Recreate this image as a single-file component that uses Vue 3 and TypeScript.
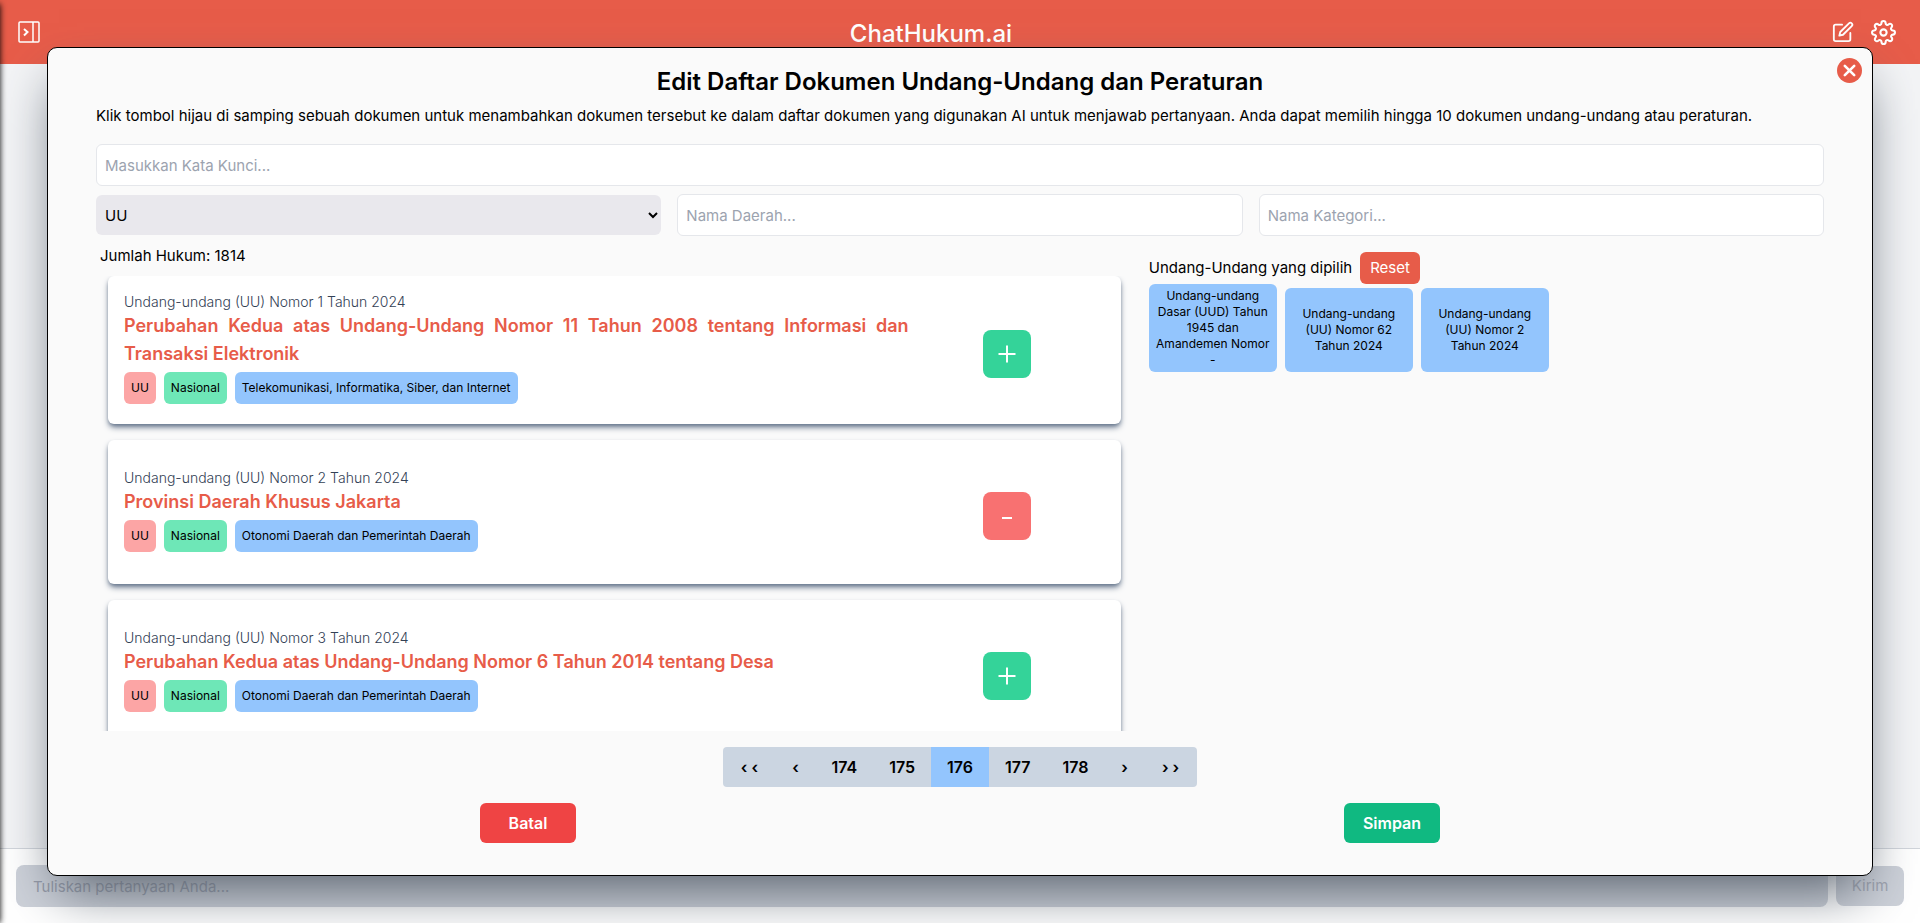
<script setup lang="ts">
import { ref } from 'vue'

interface Law {
  number: string
  title: string
  kind: string
  region: string
  category: string
  selected: boolean
}

const keyword = ref('')
const kind = ref('UU')
const region = ref('')
const category = ref('')
const question = ref('')
const total = 1814

const laws = ref<Law[]>([
  {
    number: 'Undang-undang (UU) Nomor 1 Tahun 2024',
    title: 'Perubahan Kedua atas Undang-Undang Nomor 11 Tahun 2008 tentang Informasi dan Transaksi Elektronik',
    kind: 'UU',
    region: 'Nasional',
    category: 'Telekomunikasi, Informatika, Siber, dan Internet',
    selected: false,
  },
  {
    number: 'Undang-undang (UU) Nomor 2 Tahun 2024',
    title: 'Provinsi Daerah Khusus Jakarta',
    kind: 'UU',
    region: 'Nasional',
    category: 'Otonomi Daerah dan Pemerintah Daerah',
    selected: true,
  },
  {
    number: 'Undang-undang (UU) Nomor 3 Tahun 2024',
    title: 'Perubahan Kedua atas Undang-Undang Nomor 6 Tahun 2014 tentang Desa',
    kind: 'UU',
    region: 'Nasional',
    category: 'Otonomi Daerah dan Pemerintah Daerah',
    selected: false,
  },
])

const chosen = ref<string[]>([
  'Undang-undang Dasar (UUD) Tahun 1945 dan Amandemen Nomor -',
  'Undang-undang (UU) Nomor 62 Tahun 2024',
  'Undang-undang (UU) Nomor 2 Tahun 2024',
])

const pages = [174, 175, 176, 177, 178]
const page = ref(176)
</script>

<template>
  <div class="app">
    <aside class="drawer"></aside>
    <header class="topbar">
      <button class="icon-btn" type="button" aria-label="Buka panel">
        <svg width="22" height="22" viewBox="0 0 22 22" fill="none" stroke="currentColor">
          <rect x="1" y="1" width="20" height="20" rx="1" stroke-width="1.5" />
          <path d="M15 1v20" stroke-width="1.5" />
          <path d="M6 8l3.5 3L6 14.5" stroke-width="2" />
        </svg>
      </button>
      <h1 class="brand">ChatHukum.ai</h1>
      <div class="tools">
        <button class="icon-btn" type="button" aria-label="Percakapan baru">
          <svg width="22" height="22" viewBox="0 0 24 24" fill="none" stroke="currentColor" stroke-width="2" stroke-linecap="round" stroke-linejoin="round">
            <path d="M11 4H4a2 2 0 0 0-2 2v14a2 2 0 0 0 2 2h14a2 2 0 0 0 2-2v-7" />
            <path d="M18.5 2.5a2.121 2.121 0 0 1 3 3L12 15l-4 1 1-4 9.5-9.5z" />
          </svg>
        </button>
        <button class="icon-btn" type="button" aria-label="Pengaturan">
          <svg width="25" height="25" viewBox="0 0 24 24" fill="none" stroke="currentColor" stroke-width="2" stroke-linecap="round" stroke-linejoin="round">
            <circle cx="12" cy="12" r="3" />
            <path d="M19.4 15a1.65 1.65 0 0 0 .33 1.82l.06.06a2 2 0 0 1 0 2.83 2 2 0 0 1-2.83 0l-.06-.06a1.65 1.65 0 0 0-1.82-.33 1.65 1.65 0 0 0-1 1.51V21a2 2 0 0 1-2 2 2 2 0 0 1-2-2v-.09A1.65 1.65 0 0 0 9 19.4a1.65 1.65 0 0 0-1.82.33l-.06.06a2 2 0 0 1-2.83 0 2 2 0 0 1 0-2.83l.06-.06a1.65 1.65 0 0 0 .33-1.82 1.65 1.65 0 0 0-1.51-1H3a2 2 0 0 1-2-2 2 2 0 0 1 2-2h.09A1.65 1.65 0 0 0 4.6 9a1.65 1.65 0 0 0-.33-1.82l-.06-.06a2 2 0 0 1 0-2.83 2 2 0 0 1 2.83 0l.06.06a1.65 1.65 0 0 0 1.82.33H9a1.65 1.65 0 0 0 1-1.51V3a2 2 0 0 1 2-2 2 2 0 0 1 2 2v.09a1.65 1.65 0 0 0 1 1.51 1.65 1.65 0 0 0 1.82-.33l.06-.06a2 2 0 0 1 2.83 0 2 2 0 0 1 0 2.83l-.06.06a1.65 1.65 0 0 0-.33 1.82V9a1.65 1.65 0 0 0 1.51 1H21a2 2 0 0 1 2 2 2 2 0 0 1-2 2h-.09a1.65 1.65 0 0 0-1.51 1z" />
          </svg>
        </button>
      </div>
    </header>
    <main class="chat"></main>
    <form class="composer" @submit.prevent>
      <input v-model="question" class="question" type="text" placeholder="Tuliskan pertanyaan Anda..." aria-label="Pertanyaan" disabled>
      <button class="send" type="submit" disabled>Kirim</button>
    </form>

    <div class="overlay">
      <section class="modal" role="dialog" aria-labelledby="modal-title">
        <button class="close" type="button" aria-label="Tutup">
          <svg width="25" height="25" viewBox="0 0 25 25" fill="none">
            <circle cx="12.5" cy="12.5" r="12.5" fill="#e75c49" />
            <path d="M7.8 7.8l9.4 9.4M17.2 7.8l-9.4 9.4" stroke="#fff" stroke-width="2.6" stroke-linecap="round" />
          </svg>
        </button>
        <h2 id="modal-title" class="title">Edit Daftar Dokumen Undang-Undang dan Peraturan</h2>
        <p class="intro">Klik tombol hijau di samping sebuah dokumen untuk menambahkan dokumen tersebut ke dalam daftar dokumen yang digunakan AI untuk menjawab pertanyaan. Anda dapat memilih hingga 10 dokumen undang-undang atau peraturan.</p>

        <div class="filters">
          <input v-model="keyword" class="field wide" type="text" placeholder="Masukkan Kata Kunci..." aria-label="Kata kunci">
          <select v-model="kind" class="field select" aria-label="Jenis hukum">
            <option>UU</option>
          </select>
          <input v-model="region" class="field" type="text" placeholder="Nama Daerah..." aria-label="Nama daerah">
          <input v-model="category" class="field" type="text" placeholder="Nama Kategori..." aria-label="Nama kategori">
        </div>

        <div class="columns">
          <div class="results">
            <p class="count">Jumlah Hukum: {{ total }}</p>
            <div class="list">
              <article v-for="law in laws" :key="law.number" class="card">
                <div class="info">
                  <p class="number">{{ law.number }}</p>
                  <h3 class="name">{{ law.title }}</h3>
                  <div class="tags">
                    <span class="tag red">{{ law.kind }}</span>
                    <span class="tag green">{{ law.region }}</span>
                    <span class="tag blue">{{ law.category }}</span>
                  </div>
                </div>
                <div class="action">
                  <button
                    class="toggle"
                    :class="{ remove: law.selected }"
                    type="button"
                    :aria-label="law.selected ? 'Hapus dokumen' : 'Tambah dokumen'"
                    @click="law.selected = !law.selected"
                  >
                    <svg width="18" height="18" viewBox="0 0 18 18" fill="none" stroke="#fff" stroke-width="2">
                      <path v-if="law.selected" d="M4 11h10" />
                      <path v-else d="M.5 9h17M9 .5v17" />
                    </svg>
                  </button>
                </div>
              </article>
            </div>
          </div>
          <div class="picked">
            <div class="picked-head">
              <span>Undang-Undang yang dipilih</span>
              <button class="reset" type="button" @click="chosen = []">Reset</button>
            </div>
            <div class="chips">
              <button v-for="item in chosen" :key="item" class="chip" type="button">{{ item }}</button>
            </div>
          </div>
        </div>

        <nav class="pager" aria-label="Halaman">
          <button class="page edge" type="button" aria-label="Halaman pertama">‹ ‹</button>
          <button class="page step" type="button" aria-label="Sebelumnya">‹</button>
          <button
            v-for="p in pages"
            :key="p"
            class="page"
            :class="{ current: p === page }"
            type="button"
            @click="page = p"
          >{{ p }}</button>
          <button class="page step" type="button" aria-label="Berikutnya">›</button>
          <button class="page edge" type="button" aria-label="Halaman terakhir">› ›</button>
        </nav>

        <div class="footer">
          <button class="act cancel" type="button">Batal</button>
          <button class="act save" type="button">Simpan</button>
        </div>
      </section>
    </div>
  </div>
</template>

<style>
body {
  margin: 0;
}
</style>

<style scoped>
.app,
.app * {
  box-sizing: border-box;
}

.app {
  position: relative;
  display: flex;
  flex-direction: column;
  height: 100vh;
  overflow: hidden;
  background: #f3f4f6;
  color: #000;
  font: 400 15px/24px Inter, 'Liberation Sans', sans-serif;
}

button,
input,
select {
  margin: 0;
  font: inherit;
  color: inherit;
}

button {
  padding: 0;
  border: 0;
  background: none;
}

h1,
h2,
h3,
p {
  margin: 0;
}

.drawer {
  position: absolute;
  top: 4px;
  bottom: 0;
  left: -8px;
  z-index: 1;
  width: 8px;
  box-shadow: 0 0 6px #000;
}

.topbar {
  display: flex;
  align-items: center;
  flex: none;
  height: 64px;
  padding: 0 24px 0 18px;
  background: #e75c49;
  color: #fff;
}

.icon-btn {
  display: flex;
  align-items: center;
}

.brand {
  flex: 1;
  padding: 3px 10px 0 0;
  font-size: 24px;
  font-weight: 500;
  line-height: 32px;
  text-align: center;
}

.tools {
  display: flex;
  align-items: center;
  gap: 17px;
}

.chat {
  flex: 1;
}

.composer {
  display: flex;
  align-items: center;
  gap: 8px;
  height: 75px;
  padding: 0 16px;
  border-top: 1px solid #d1d5db;
  background: #fff;
}

.question {
  flex: 1;
  height: 42px;
  padding: 0 17px;
  border: 0;
  border-radius: 8px;
  background: #cdd1d9;
}

.question::placeholder {
  color: #9499a7;
  opacity: 1;
}

.send {
  width: 68px;
  height: 40px;
  border-radius: 8px;
  background: #cdd1d9;
  color: #9fa4b0;
}

.overlay {
  position: absolute;
  inset: 0;
  z-index: 2;
  padding: 47px;
}

.modal {
  position: relative;
  display: flex;
  flex-direction: column;
  height: 100%;
  padding: 18px 48px 32px;
  border: 1px solid #000;
  border-radius: 10px;
  background: #fafafa;
  box-shadow: 0 25px 50px -12px #57606c;
}

.close {
  position: absolute;
  top: 10px;
  right: 10px;
  display: flex;
}

.title {
  margin-bottom: 6px;
  font-size: 24px;
  font-weight: 600;
  line-height: 32px;
  text-align: center;
}

.intro {
  margin-bottom: 16px;
}

.filters {
  display: grid;
  grid-template-columns: repeat(3, 1fr);
  align-items: center;
  gap: 8px 16px;
}

.field {
  width: 100%;
  height: 42px;
  padding: 0 8px;
  border: 1px solid #e5e7eb;
  border-radius: 6px;
  background: #fff;
}

.field::placeholder {
  color: #9ca3af;
  opacity: 1;
}

.wide {
  grid-column: 1 / -1;
}

.select {
  height: 40px;
  padding: 0 5px;
  border: 0;
  background: #e9e8ed;
}

.columns {
  display: grid;
  grid-template-columns: 3fr 2fr;
  grid-template-rows: 100%;
  flex: 1;
  min-height: 0;
}

.results {
  display: flex;
  flex-direction: column;
  min-height: 0;
  padding-top: 8px;
}

.count {
  margin: 0 4px 8px;
}

.list {
  display: flex;
  flex-direction: column;
  gap: 16px;
  flex: 1;
  min-height: 0;
  padding: 0 12px;
  overflow: hidden;
}

.card {
  display: flex;
  align-items: center;
  flex: none;
  min-height: 144px;
  padding: 16px;
  border-radius: 6px;
  background: #fff;
  box-shadow: 0 4px 6px -1px #64748b, 0 2px 4px -2px #64748b;
}

.info {
  width: 80%;
}

.number {
  color: #334155;
  font-size: 14px;
  font-weight: 300;
  line-height: 20px;
}

.name {
  color: #e75c49;
  font-size: 18px;
  font-weight: 600;
  line-height: 28px;
  text-align: justify;
}

.tags {
  display: flex;
  gap: 8px;
  margin: 4px 0;
}

.tag {
  padding: 8px 7px;
  border-radius: 6px;
  font-size: 12px;
  line-height: 16px;
}

.red {
  background: #fca5a5;
}

.green {
  background: #6ee7b7;
}

.blue {
  background: #93c5fd;
}

.action {
  display: flex;
  justify-content: center;
  width: 20%;
  padding-top: 8px;
}

.toggle {
  display: flex;
  align-items: center;
  justify-content: center;
  width: 48px;
  height: 48px;
  border-radius: 8px;
  background: #34d399;
}

.remove {
  background: #f87171;
}

.picked {
  padding: 16px 0 0 16px;
}

.picked-head {
  display: flex;
  align-items: center;
  gap: 8px;
}

.reset {
  padding: 4px 10px;
  border-radius: 6px;
  background: #e75c49;
  color: #fff;
}

.chips {
  display: flex;
  align-items: flex-end;
  gap: 8px;
}

.chip {
  width: 128px;
  min-height: 84px;
  padding: 4px 6px;
  border-radius: 6px;
  background: #93c5fd;
  font-size: 12px;
  line-height: 16px;
}

.pager {
  display: flex;
  align-self: center;
  margin-top: 16px;
  border-radius: 4px;
  background: #cbd5e1;
  overflow: hidden;
}

.page {
  height: 40px;
  padding: 0 16px;
  font-size: 16px;
  font-weight: 600;
}

.step {
  width: 40px;
}

.edge {
  width: 52px;
}

.current {
  background: #93c5fd;
}

.footer {
  display: grid;
  grid-template-columns: 1fr 1fr;
  justify-items: center;
  margin-top: 16px;
}

.act {
  width: 96px;
  height: 40px;
  border-radius: 6px;
  color: #fff;
  font-size: 16px;
  font-weight: 600;
}

.cancel {
  background: #ef4444;
}

.save {
  background: #10b981;
}
</style>
